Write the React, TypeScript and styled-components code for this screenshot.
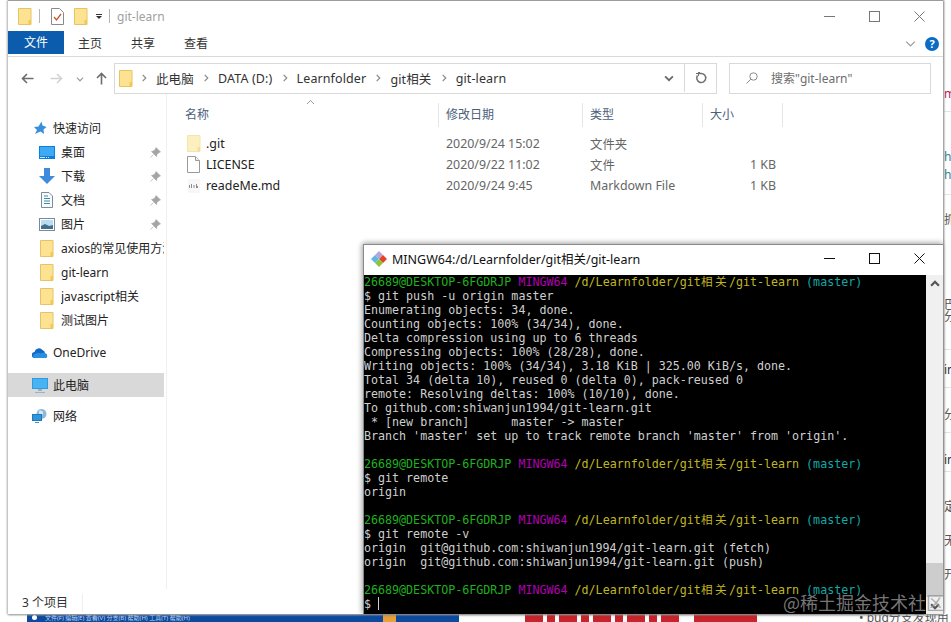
import React from 'react'
import styled, { createGlobalStyle } from 'styled-components'

const UI_FONT = '"Noto Sans", "Noto Sans CJK SC", sans-serif'
const MONO_FONT = '"DejaVu Sans Mono", "Noto Sans CJK SC", monospace'

const GlobalStyle = createGlobalStyle`
	html, body {
		margin: 0;
		padding: 0;
		background: #fff;
		overflow: hidden;
	}
`

//#region icons
function Folder({ w = 14, h = 17, pale = false }: { w?: number; h?: number; pale?: boolean }) {
	return (
		<svg width={w} height={h} viewBox="0 0 14 17">
			<path d="M.5.5h12.5v16H.5z" fill={pale ? '#fdf0c0' : '#fde391'} stroke={pale ? '#f5e4ae' : '#e6c463'} />
			<path d="M10.5 12h2.5v4.500h-2.500z" fill={pale ? '#f5dd95' : '#f2c94f'} />
		</svg>
	)
}

function DocCheck() {
	return (
		<svg width="13" height="17" viewBox="0 0 13 17">
			<path d="M.5.5h8l4 4v12H.5z" fill="#fff" stroke="#8a8a8a" />
			<path d="M3 9l2.500 3L10 6" fill="none" stroke="#c8562c" strokeWidth="1.300" />
		</svg>
	)
}

function FileIcon() {
	return (
		<svg width="13" height="17" viewBox="0 0 13 17">
			<path d="M.5.5h8l4 4v12H.5z" fill="#fff" stroke="#9a9a9a" />
			<path d="M8.500.5v4h4" fill="#f0f0f0" stroke="#9a9a9a" />
		</svg>
	)
}

function MdIcon() {
	return (
		<svg width="14" height="16" viewBox="0 0 14 16">
			<rect x="1" y="1" width="12" height="14" fill="#f7f7f7" />
			<path d="M2 7h1v3H2zM4 6h1v4H4zM6.500 7h1v3h-1zM9 6h1v2h1v2H9z" fill="#8d8d8d" />
		</svg>
	)
}

function QuickStar() {
	return (
		<svg width="14" height="14" viewBox="0 0 14 14">
			<path d="M8.500.5l1 4 4 1.500-3 2.500.5 4.500-3.500-2.500L2 13l2-4-3-3 4.500-.5z" fill="#3a8fdc" />
		</svg>
	)
}

function DesktopIcon() {
	return (
		<svg width="16" height="13" viewBox="0 0 16 13">
			<rect width="16" height="13" fill="#0b7fe0" />
			<rect x="1" y="1" width="14" height="9" fill="#3eaaf5" />
			<path d="M1 11h5v1H1zM7 11h1v1H7zM9 11h1v1H9z" fill="#cfe8fb" />
		</svg>
	)
}

function DownloadIcon() {
	return (
		<svg width="16" height="16" viewBox="0 0 16 16">
			<path d="M5 0h6v8h5l-8 8-8-8h5z" fill="#3c8bdc" />
		</svg>
	)
}

function DocsIcon() {
	return (
		<svg width="12" height="16" viewBox="0 0 12 16">
			<path d="M.5.5h7.500l3.500 3.500v11.500H.5z" fill="#f7fbff" stroke="#7d8b99" />
			<path d="M3 4h4M3 6.500h6M3 9h6M3 11.500h6" stroke="#3c8f9e" />
		</svg>
	)
}

function PicturesIcon() {
	return (
		<svg width="16" height="13" viewBox="0 0 16 13">
			<rect x=".5" y=".5" width="15" height="12" fill="#fff" stroke="#7b8a99" />
			<rect x="2" y="2" width="12" height="9" fill="#b9dcf0" />
			<path d="M2 8l4-2 4 2 4-1v4H2z" fill="#3f6f8a" />
		</svg>
	)
}

function Pin() {
	return (
		<svg width="11" height="11" viewBox="0 0 11 11">
			<path d="M6 .5l4.500 4.500-1.500.5-2 2-.5 2L1.500 4.500l2-.5 2-2zM3.500 7.500L.5 10.500" fill="#a5a5a5" stroke="#a5a5a5" strokeWidth=".6" />
		</svg>
	)
}

function Cloud() {
	return (
		<svg width="16" height="11" viewBox="0 0 16 11">
			<path d="M3 11a3 3 0 0 1-.5-6A4.500 4.500 0 0 1 10.500 3 3.500 3.500 0 0 1 13 6.500 2.300 2.300 0 0 1 13.500 11z" fill="#1269c4" />
			<path d="M3 11a2 2 0 0 1 0-4c1.500-1 3-2 5.500-.5 2-1 4.500-1 5 0 2 .5 2.500 4.500 0 4.500z" fill="#2b8fe0" />
		</svg>
	)
}

function Monitor() {
	return (
		<svg width="16" height="15" viewBox="0 0 16 15">
			<rect x=".5" y=".5" width="15" height="10" fill="#48b3f2" stroke="#2f9ae0" />
			<path d="M6 11h4v2H6zM3 14h10v1H3z" fill="#9cb2c2" />
		</svg>
	)
}

function Network() {
	return (
		<svg width="16" height="15" viewBox="0 0 16 15">
			<circle cx="9.500" cy="5" r="5" fill="#8fb7dc" />
			<path d="M7 2c2-1 4 0 4 2s-2 3-4 2z" fill="#d7e8f5" />
			<rect x=".5" y="5.500" width="9" height="6" fill="#2f96dc" stroke="#1d79b8" />
			<path d="M3 13h4v1H3z" fill="#4a8ebc" />
		</svg>
	)
}

function GitLogo() {
	return (
		<svg width="16" height="16" viewBox="0 0 16 16">
			<path d="M8 0l4 4-4 4-4-4z" fill="#b4a7d6" />
			<path d="M12 4l4 4-4 4-4-4z" fill="#e24329" />
			<path d="M4 4l4 4-4 4-4-4z" fill="#62b5e5" />
			<path d="M8 8l4 4-4 4-4-4z" fill="#8cc63f" />
		</svg>
	)
}

function Chevron({ dir = 'right', color = '#8c8c8c', size = 9, sw = 1.4 }: { dir?: 'right' | 'down' | 'up'; color?: string; size?: number; sw?: number }) {
	const d = dir === 'right' ? 'M3 1l3.500 3.500L3 8' : dir === 'down' ? 'M1 3l3.500 3.500L8 3' : 'M1 6l3.500-3.500L8 6'
	return (
		<svg width={size} height={size} viewBox="0 0 9 9">
			<path d={d} fill="none" stroke={color} strokeWidth={sw} />
		</svg>
	)
}

function Arrow({ rotate, color }: { rotate: number; color: string }) {
	return (
		<svg width="13" height="13" viewBox="0 0 13 13" style={{ transform: `rotate(${rotate}deg)` }}>
			<path d="M12.500 6.500H1.500M6 2L1.500 6.500 6 11" fill="none" stroke={color} strokeWidth="1.600" />
		</svg>
	)
}

function Refresh() {
	return (
		<svg width="12" height="12" viewBox="0 0 12 12">
			<path d="M2.500 3.500A4.500 4.500 0 1 0 6 1.500H3.500" fill="none" stroke="#6f6f6f" strokeWidth="1.500" />
			<path d="M1 1.500h3.500v-1.500M3.500 0v4" fill="none" stroke="#6f6f6f" strokeWidth="1" />
		</svg>
	)
}

function SearchGlass() {
	return (
		<svg width="12" height="12" viewBox="0 0 12 12">
			<circle cx="7.500" cy="4.500" r="3.700" fill="none" stroke="#8a8a8a" />
			<path d="M4.800 7.200L.5 11.500" stroke="#8a8a8a" />
		</svg>
	)
}

function MinIcon({ color }: { color: string }) {
	return (
		<svg width="11" height="11" viewBox="0 0 11 11">
			<path d="M0 5.500h11" stroke={color} />
		</svg>
	)
}

function MaxIcon({ color }: { color: string }) {
	return (
		<svg width="11" height="11" viewBox="0 0 11 11">
			<rect x=".5" y=".5" width="10" height="10" fill="none" stroke={color} />
		</svg>
	)
}

function CloseIcon({ color }: { color: string }) {
	return (
		<svg width="11" height="11" viewBox="0 0 11 11">
			<path d="M.5.500l10 10M10.500.500l-10 10" stroke={color} />
		</svg>
	)
}
//#endregion

const navItems = [
	{ label: '快速访问', icon: <QuickStar />, level: 0, gap: 0 },
	{ label: '桌面', icon: <DesktopIcon />, level: 1, pin: true, gap: 0 },
	{ label: '下载', icon: <DownloadIcon />, level: 1, pin: true, gap: 0 },
	{ label: '文档', icon: <DocsIcon />, level: 1, pin: true, gap: 0 },
	{ label: '图片', icon: <PicturesIcon />, level: 1, pin: true, gap: 0 },
	{ label: 'axios的常见使用方法', icon: <Folder />, level: 1, gap: 0 },
	{ label: 'git-learn', icon: <Folder />, level: 1, gap: 0 },
	{ label: 'javascript相关', icon: <Folder />, level: 1, gap: 0 },
	{ label: '测试图片', icon: <Folder />, level: 1, gap: 0 },
	{ label: 'OneDrive', icon: <Cloud />, level: 0, gap: 8 },
	{ label: '此电脑', icon: <Monitor />, level: 0, gap: 9, selected: true },
	{ label: '网络', icon: <Network />, level: 0, gap: 7 },
]

const files = [
	{ name: '.git', icon: <Folder w={14} h={17} pale />, date: '2020/9/24 15:02', type: '文件夹', size: '' },
	{ name: 'LICENSE', icon: <FileIcon />, date: '2020/9/22 11:02', type: '文件', size: '1 KB' },
	{ name: 'readeMe.md', icon: <MdIcon />, date: '2020/9/24 9:45', type: 'Markdown File', size: '1 KB' },
]

const crumbs = ['此电脑', 'DATA (D:)', 'Learnfolder', 'git相关', 'git-learn']

const columns = [
	{ label: '名称', width: 262 },
	{ label: '修改日期', width: 144 },
	{ label: '类型', width: 120 },
	{ label: '大小', width: 80 },
]

// what is visible of the page behind the windows, top to bottom
const sideRows = [
	{ h: 87, text: '' },
	{ h: 25, text: 'me', color: '#c2185b', line: true },
	{ h: 38, text: '' },
	{ h: 18, text: 'hu', color: '#2a7f8f' },
	{ h: 27, text: 'hu', color: '#2a7f8f', line: true },
	{ h: 18, text: '' },
	{ h: 85, text: '抓', color: '#555' },
	{ h: 12, text: '巴', color: '#555' },
	{ h: 40, text: '分', color: '#555', line: true },
	{ h: 13, text: '' },
	{ h: 25, text: 'in', color: '#333', line: true },
	{ h: 20, text: '' },
	{ h: 25, text: '分', color: '#555', line: true },
	{ h: 20, text: '' },
	{ h: 19, text: 'in', color: '#333', line: true },
	{ h: 28, text: '' },
	{ h: 34, text: '定', color: '#555' },
	{ h: 34, text: '无', color: '#555' },
	{ h: 30, text: '开', color: '#555' },
]

const Prompt = () => (
	<Line>
		<Ansi $c="#1fb01f">26689@DESKTOP-6FGDRJP</Ansi> <Ansi $c="#b100b1">MINGW64</Ansi>{' '}
		<Ansi $c="#c0b820">/d/Learnfolder/git<Wide>相关</Wide>/git-learn</Ansi> <Ansi $c="#11a8a8">(master)</Ansi>
	</Line>
)

function App() {
	return (
		<Desktop>
			<GlobalStyle />
			<SideStrip>
				{sideRows.map((row, i) => (
					<SideRow key={'side' + i} $h={row.h} $c={row.color} $line={row.line}>{row.text}</SideRow>
				))}
			</SideStrip>

			<BackStrip>
				<BlueBar>
					<BlueDot />
					<BlueMenu>文件(F) 编辑(E) 查看(V) 分支(B) 帮助(H) 工具(T) 帮助(H)</BlueMenu>
					<OrangeTab />
				</BlueBar>
				<RedLetters />
				<RedBlock />
				<BackNote>• bug分支发现用</BackNote>
			</BackStrip>

			<Explorer>
				<TitleBar>
					<Folder w={14} h={17} />
					<TitleSep />
					<DocCheck />
					<Folder w={14} h={17} />
					<QuickDrop />
					<TitleSep />
					<WindowTitle>git-learn</WindowTitle>
					<WinButtons>
						<MinIcon color="#777" />
						<MaxIcon color="#777" />
						<CloseIcon color="#777" />
					</WinButtons>
				</TitleBar>

				<Ribbon>
					<FileTab>文件</FileTab>
					<RibbonTab>主页</RibbonTab>
					<RibbonTab>共享</RibbonTab>
					<RibbonTab>查看</RibbonTab>
					<RibbonRight>
						<Chevron dir="down" color="#9b9b9b" size={11} sw={1} />
						<Help>?</Help>
					</RibbonRight>
				</Ribbon>

				<AddressRow>
					<NavArrows>
						<Arrow rotate={0} color="#6d6d6d" />
						<Arrow rotate={180} color="#d2d2d2" />
						<Chevron dir="down" color="#a0a0a0" size={8} />
						<Arrow rotate={90} color="#6d6d6d" />
					</NavArrows>
					<AddressBox>
						<Folder w={14} h={17} />
						{crumbs.map(c => (
							<Crumb key={c}>
								<Chevron color="#8c8c8c" size={8} />
								<span>{c}</span>
							</Crumb>
						))}
						<AddressDrop><Chevron dir="down" color="#6a6a6a" size={10} sw={1.6} /></AddressDrop>
						<RefreshCell><Refresh /></RefreshCell>
					</AddressBox>
					<SearchBox>
						<SearchGlass />
						<span>搜索"git-learn"</span>
					</SearchBox>
				</AddressRow>

				<Body>
					<NavPane>
						{navItems.map(item => (
							<NavRow key={item.label} $level={item.level} $gap={item.gap} $selected={item.selected}>
								<NavIcon $level={item.level}>{item.icon}</NavIcon>
								<NavLabel>{item.label}</NavLabel>
								{item.pin && <PinSlot><Pin /></PinSlot>}
							</NavRow>
						))}
					</NavPane>
					<FileArea>
						<SortCaret><Chevron dir="up" color="#9a9a9a" size={9} sw={1} /></SortCaret>
						<HeaderRow>
							{columns.map(col => (
								<HeaderCell key={col.label} $w={col.width}>{col.label}</HeaderCell>
							))}
						</HeaderRow>
						<FileList>
							{files.map(f => (
								<FileRow key={f.name}>
									<NameCell>
										<FileIconSlot>{f.icon}</FileIconSlot>
										{f.name}
									</NameCell>
									<MetaCell>{f.date}</MetaCell>
									<MetaCell>{f.type}</MetaCell>
									<SizeCell>{f.size}</SizeCell>
								</FileRow>
							))}
						</FileList>
					</FileArea>
				</Body>

				<StatusBar>
					<StatusText>3 个项目</StatusText>
				</StatusBar>
			</Explorer>

			<Terminal>
				<TermTitle>
					<GitLogo />
					<TermName>MINGW64:/d/Learnfolder/git相关/git-learn</TermName>
					<TermButtons>
						<MinIcon color="#111" />
						<MaxIcon color="#111" />
						<CloseIcon color="#111" />
					</TermButtons>
				</TermTitle>
				<TermBody>
					<Console>
						<Prompt />
						<Line>$ git push -u origin master</Line>
						<Line>Enumerating objects: 34, done.</Line>
						<Line>Counting objects: 100% (34/34), done.</Line>
						<Line>Delta compression using up to 6 threads</Line>
						<Line>Compressing objects: 100% (28/28), done.</Line>
						<Line>Writing objects: 100% (34/34), 3.18 KiB | 325.00 KiB/s, done.</Line>
						<Line>Total 34 (delta 10), reused 0 (delta 0), pack-reused 0</Line>
						<Line>remote: Resolving deltas: 100% (10/10), done.</Line>
						<Line>To github.com:shiwanjun1994/git-learn.git</Line>
						<Line> * [new branch]      master -&gt; master</Line>
						<Line>Branch 'master' set up to track remote branch 'master' from 'origin'.</Line>
						<Line> </Line>
						<Prompt />
						<Line>$ git remote</Line>
						<Line>origin</Line>
						<Line> </Line>
						<Prompt />
						<Line>$ git remote -v</Line>
						<Line>origin  git@github.com:shiwanjun1994/git-learn.git (fetch)</Line>
						<Line>origin  git@github.com:shiwanjun1994/git-learn.git (push)</Line>
						<Line> </Line>
						<Prompt />
						<Line>$ <Cursor /></Line>
					</Console>
					<ScrollBar>
						<ScrollEnd><Chevron dir="up" color="#555" size={10} sw={2} /></ScrollEnd>
						<ScrollThumb />
						<ScrollEnd><Chevron dir="down" color="#555" size={10} sw={2} /></ScrollEnd>
					</ScrollBar>
				</TermBody>
			</Terminal>

			<Watermark>@稀土掘金技术社区</Watermark>
		</Desktop>
	)
}

export default App

//#region styles
const Desktop = styled.div`
	position: relative;
	width: 951px;
	height: 622px;
	overflow: hidden;
	background: #fff;
	font-family: ${UI_FONT};
`

const SideStrip = styled.div`
	position: absolute;
	top: 0;
	left: 943px;
	width: 8px;
	display: flex;
	flex-direction: column;
	overflow: hidden;
`

const SideRow = styled.div<{ $h: number; $c?: string; $line?: boolean }>`
	box-sizing: border-box;
	flex: none;
	height: ${p => p.$h}px;
	padding-left: 1px;
	font-size: 12px;
	line-height: 14px;
	white-space: nowrap;
	color: ${p => p.$c || '#333'};
	border-bottom: ${p => (p.$line ? '1px solid #e4e4e4' : 'none')};
`

const BackStrip = styled.div`
	position: absolute;
	left: 0;
	right: 0;
	top: 614px;
	height: 8px;
	display: flex;
	overflow: hidden;
`

const BlueBar = styled.div`
	box-sizing: border-box;
	margin-left: 27px;
	width: 432px;
	display: flex;
	background: #0b4a9e;
	padding-left: 5px;
`

const BlueDot = styled.div`
	width: 5px;
	height: 5px;
	margin: 1px 8px 0 0;
	border-radius: 50%;
	background: #fff;
`

const BlueMenu = styled.div`
	width: 338px;
	font-size: 6px;
	line-height: 8px;
	color: #c5d6ee;
	white-space: nowrap;
	overflow: hidden;
`

const OrangeTab = styled.div`
	width: 13px;
	background: #e8a03a;
`

const RedLetters = styled.div`
	margin-left: 66px;
	width: 158px;
	background: repeating-linear-gradient(90deg, #c9242b 0 18px, #fff 18px 22px, #c9242b 22px 30px, #fff 30px 34px);
`

const RedBlock = styled.div`
	margin-left: 11px;
	width: 63px;
	background: #c9242b;
`

const BackNote = styled.div`
	margin-left: 102px;
	font-size: 12px;
	line-height: 8px;
	color: #555;
	white-space: nowrap;
`

const Explorer = styled.div`
	position: absolute;
	left: 8px;
	top: 0;
	width: 935px;
	height: 614px;
	display: flex;
	flex-direction: column;
	background: #fff;
	border-top: 1px solid #9c9c9c;
	box-sizing: border-box;
	box-shadow: -1px 0 2px #bdbdbd, 1px 0 2px #8a8a8a, 0 1px 2px #9a9a9a;
`

const TitleBar = styled.div`
	display: flex;
	align-items: center;
	gap: 0;
	height: 30px;
	padding-left: 10px;
	box-sizing: border-box;
	& > svg:nth-of-type(2) {
		margin-left: 0;
		margin-right: 10px;
	}
`

const TitleSep = styled.div`
	width: 1px;
	height: 14px;
	background: #b5b5b5;
	margin: 0 11px 0 7px;
`

const QuickDrop = styled.div`
	width: 6px;
	height: 5px;
	margin-left: 8px;
	border-top: 1px solid #333;
	box-sizing: border-box;
	position: relative;
	&::after {
		content: '';
		position: absolute;
		top: 1px;
		left: 0;
		border-left: 3px solid transparent;
		border-right: 3px solid transparent;
		border-top: 3px solid #333;
	}
`

const WindowTitle = styled.div`
	font-size: 12px;
	color: #a0a0a0;
	margin-left: -4px;
`

const WinButtons = styled.div`
	margin-left: auto;
	padding-right: 18px;
	display: flex;
	align-items: center;
	gap: 34px;
`

const Ribbon = styled.div`
	display: flex;
	align-items: stretch;
	height: 26px;
	border-bottom: 1px solid #dadada;
	box-sizing: border-box;
`

const FileTab = styled.div`
	width: 56px;
	height: 23px;
	background: #0b5cad;
	color: #fff;
	font-size: 12px;
	line-height: 23px;
	text-align: center;
`

const RibbonTab = styled.div`
	box-sizing: border-box;
	width: 53px;
	height: 23px;
	padding-right: 1px;
	font-size: 12px;
	line-height: 25px;
	text-align: center;
	color: #333;
`

const RibbonRight = styled.div`
	margin-left: auto;
	padding-right: 4px;
	display: flex;
	align-items: center;
	gap: 9px;
`

const Help = styled.div`
	width: 14px;
	height: 14px;
	border-radius: 50%;
	background: #0a6cc4;
	color: #fff;
	font-size: 11px;
	font-weight: 700;
	line-height: 14px;
	text-align: center;
`

const AddressRow = styled.div`
	display: flex;
	align-items: center;
	height: 31px;
	margin-top: 6px;
`

const NavArrows = styled.div`
	width: 106px;
	padding-left: 13px;
	box-sizing: border-box;
	display: flex;
	align-items: center;
	gap: 0;
	& > svg:nth-child(2) {
		margin-left: 16px;
	}
	& > svg:nth-child(3) {
		margin-left: 13px;
	}
	& > svg:nth-child(4) {
		margin-left: 11px;
	}
`

const AddressBox = styled.div`
	box-sizing: border-box;
	width: 603px;
	height: 31px;
	display: flex;
	align-items: center;
	padding: 0 0 1px 4px;
	border: 1px solid #d9d9d9;
	font-size: 12.500px;
	letter-spacing: 0.100px;
	color: #333;
`

const Crumb = styled.div`
	display: flex;
	align-items: center;
	gap: 8px;
	margin-left: 7px;
	white-space: nowrap;
	& + & {
		margin-left: 8.300px;
	}
`

const AddressDrop = styled.div`
	margin-left: auto;
	width: 30px;
	display: flex;
	justify-content: center;
`

const RefreshCell = styled.div`
	width: 31px;
	height: 100%;
	display: flex;
	align-items: center;
	justify-content: center;
	border-left: 1px solid #d9d9d9;
`

const SearchBox = styled.div`
	box-sizing: border-box;
	margin-left: 12px;
	width: 202px;
	height: 31px;
	display: flex;
	align-items: center;
	gap: 13px;
	padding: 0 0 1px 16px;
	border: 1px solid #d9d9d9;
	font-size: 12px;
	color: #6d6d6d;
`

const Body = styled.div`
	flex: 1;
	min-height: 0;
	display: flex;
`

const NavPane = styled.div`
	box-sizing: border-box;
	width: 159px;
	padding: 22px 0 0;
	display: flex;
	flex-direction: column;
	border-right: 1px solid #f0f0f0;
`

const NavRow = styled.div<{ $level: number; $gap: number; $selected?: boolean }>`
	flex: none;
	width: 156px;
	height: 24px;
	margin-top: ${p => p.$gap}px;
	display: flex;
	align-items: center;
	background: ${p => (p.$selected ? '#d9d9d9' : 'transparent')};
	font-size: 12px;
	color: #222;
	overflow: hidden;
`

const NavIcon = styled.div<{ $level: number }>`
	flex: none;
	display: flex;
	justify-content: center;
	width: 18px;
	margin-left: ${p => (p.$level ? 30 : 23)}px;
	margin-right: ${p => (p.$level ? 5 : 4)}px;
`

const NavLabel = styled.div`
	white-space: nowrap;
	overflow: hidden;
	flex: 1;
`

const PinSlot = styled.div`
	flex: none;
	display: flex;
	margin-right: 3px;
`

const FileArea = styled.div`
	position: relative;
	flex: 1;
	padding: 9px 0 0 10px;
`

const SortCaret = styled.div`
	position: absolute;
	display: flex;
	top: 4px;
	left: 139px;
`

const HeaderRow = styled.div`
	display: flex;
	height: 24px;
`

const HeaderCell = styled.div<{ $w: number }>`
	box-sizing: border-box;
	width: ${p => p.$w}px;
	padding-left: 7px;
	border-right: 1px solid #e5e5e5;
	font-size: 12px;
	line-height: 24px;
	color: #4c607a;
	&:first-child {
		padding-left: 8px;
	}
`

const FileList = styled.div`
	padding-top: 6px;
	display: flex;
	flex-direction: column;
`

const FileRow = styled.div`
	display: grid;
	grid-template-columns: 262px 144px 120px 73px;
	height: 21px;
	align-items: center;
	font-size: 12.400px;
`

const NameCell = styled.div`
	display: flex;
	align-items: center;
	padding-left: 10px;
	color: #222;
`

const FileIconSlot = styled.div`
	width: 19px;
	flex: none;
	display: flex;
`

const MetaCell = styled.div`
	padding-left: 7px;
	color: #666;
`

const SizeCell = styled.div`
	text-align: right;
	color: #666;
`

const StatusBar = styled.div`
	flex: none;
	height: 25px;
	padding: 2px 0 0 14px;
	box-sizing: border-box;
	display: flex;
	align-items: center;
`

const StatusText = styled.div`
	padding-right: 14px;
	height: 18px;
	line-height: 18px;
	font-size: 12px;
	color: #333;
	border-right: 1px solid #eee;
`

const Terminal = styled.div`
	position: absolute;
	left: 363px;
	top: 244px;
	width: 580px;
	height: 370px;
	display: flex;
	flex-direction: column;
	background: #fff;
	box-sizing: border-box;
	border: 1px solid #8a8a8a;
	border-bottom: none;
	border-right: none;
	box-shadow: -2px 0 5px rgba(0, 0, 0, 0.2), 0 -2px 5px rgba(0, 0, 0, 0.2);
`

const TermTitle = styled.div`
	flex: none;
	height: 30px;
	box-sizing: border-box;
	padding: 0 0 3px 7px;
	display: flex;
	align-items: center;
`

const TermName = styled.div`
	margin-left: 5px;
	font-size: 12.500px;
	color: #111;
	white-space: nowrap;
`

const TermButtons = styled.div`
	margin-left: auto;
	padding-right: 18px;
	display: flex;
	align-items: center;
	gap: 34px;
`

const TermBody = styled.div`
	flex: 1;
	min-height: 0;
	display: flex;
`

const Console = styled.div`
	flex: 1;
	background: #000;
	overflow: hidden;
	font-family: ${MONO_FONT};
	font-size: 11.670px;
	line-height: 14px;
	color: #cfcfcf;
`

const Line = styled.div`
	height: 14px;
	white-space: pre;
`

const Ansi = styled.span<{ $c: string }>`
	color: ${p => p.$c};
`

const Wide = styled.span`
	letter-spacing: 2.330px;
`

const Cursor = styled.span`
	display: inline-block;
	width: 1px;
	height: 13px;
	background: #cfcfcf;
	vertical-align: -2px;
`

const ScrollBar = styled.div`
	flex: none;
	width: 17px;
	display: flex;
	flex-direction: column;
	background: #f0f0f0;
`

const ScrollEnd = styled.div`
	flex: none;
	height: 17px;
	display: flex;
	align-items: center;
	justify-content: center;
`

const ScrollThumb = styled.div`
	margin-top: auto;
	height: 34px;
	background: #cdcdcd;
`

const Watermark = styled.div`
	position: absolute;
	left: 783px;
	top: 590px;
	font-family: "Noto Sans CJK SC", sans-serif;
	font-size: 18px;
	line-height: 24px;
	color: rgba(150, 150, 150, 0.8);
	white-space: nowrap;
`
//#endregion
